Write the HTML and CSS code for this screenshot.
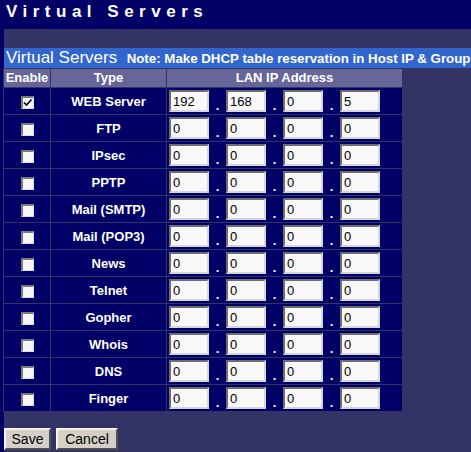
FILE: index.html
```html
<!DOCTYPE html>
<html lang="en">
<head>
    <meta charset="UTF-8">
    <title>Virtual Servers</title>
    <link rel="stylesheet" href="styles.css">
</head>
<body>
    <div class="page-title">Virtual Servers</div>

    <div class="main">
        <div class="section-bar">
            <span class="section-name">Virtual Servers</span>
            <span class="section-note">Note: Make DHCP table reservation in Host IP &amp; Group</span>
        </div>

        <form>
            <table class="servers">
                <tr>
                    <th class="col-enable">Enable</th>
                    <th class="col-type">Type</th>
                    <th class="col-ip">LAN IP Address</th>
                </tr>
                <tr>
                    <td><input type="checkbox" class="chk" checked></td>
                    <td>WEB Server</td>
                    <td><div class="ip"><input type="text" value="192"><span class="dot">.</span><input type="text" value="168"><span class="dot">.</span><input type="text" value="0"><span class="dot">.</span><input type="text" value="5"></div></td>
                </tr>
                <tr>
                    <td><input type="checkbox" class="chk"></td>
                    <td>FTP</td>
                    <td><div class="ip"><input type="text" value="0"><span class="dot">.</span><input type="text" value="0"><span class="dot">.</span><input type="text" value="0"><span class="dot">.</span><input type="text" value="0"></div></td>
                </tr>
                <tr>
                    <td><input type="checkbox" class="chk"></td>
                    <td>IPsec</td>
                    <td><div class="ip"><input type="text" value="0"><span class="dot">.</span><input type="text" value="0"><span class="dot">.</span><input type="text" value="0"><span class="dot">.</span><input type="text" value="0"></div></td>
                </tr>
                <tr>
                    <td><input type="checkbox" class="chk"></td>
                    <td>PPTP</td>
                    <td><div class="ip"><input type="text" value="0"><span class="dot">.</span><input type="text" value="0"><span class="dot">.</span><input type="text" value="0"><span class="dot">.</span><input type="text" value="0"></div></td>
                </tr>
                <tr>
                    <td><input type="checkbox" class="chk"></td>
                    <td>Mail (SMTP)</td>
                    <td><div class="ip"><input type="text" value="0"><span class="dot">.</span><input type="text" value="0"><span class="dot">.</span><input type="text" value="0"><span class="dot">.</span><input type="text" value="0"></div></td>
                </tr>
                <tr>
                    <td><input type="checkbox" class="chk"></td>
                    <td>Mail (POP3)</td>
                    <td><div class="ip"><input type="text" value="0"><span class="dot">.</span><input type="text" value="0"><span class="dot">.</span><input type="text" value="0"><span class="dot">.</span><input type="text" value="0"></div></td>
                </tr>
                <tr>
                    <td><input type="checkbox" class="chk"></td>
                    <td>News</td>
                    <td><div class="ip"><input type="text" value="0"><span class="dot">.</span><input type="text" value="0"><span class="dot">.</span><input type="text" value="0"><span class="dot">.</span><input type="text" value="0"></div></td>
                </tr>
                <tr>
                    <td><input type="checkbox" class="chk"></td>
                    <td>Telnet</td>
                    <td><div class="ip"><input type="text" value="0"><span class="dot">.</span><input type="text" value="0"><span class="dot">.</span><input type="text" value="0"><span class="dot">.</span><input type="text" value="0"></div></td>
                </tr>
                <tr>
                    <td><input type="checkbox" class="chk"></td>
                    <td>Gopher</td>
                    <td><div class="ip"><input type="text" value="0"><span class="dot">.</span><input type="text" value="0"><span class="dot">.</span><input type="text" value="0"><span class="dot">.</span><input type="text" value="0"></div></td>
                </tr>
                <tr>
                    <td><input type="checkbox" class="chk"></td>
                    <td>Whois</td>
                    <td><div class="ip"><input type="text" value="0"><span class="dot">.</span><input type="text" value="0"><span class="dot">.</span><input type="text" value="0"><span class="dot">.</span><input type="text" value="0"></div></td>
                </tr>
                <tr>
                    <td><input type="checkbox" class="chk"></td>
                    <td>DNS</td>
                    <td><div class="ip"><input type="text" value="0"><span class="dot">.</span><input type="text" value="0"><span class="dot">.</span><input type="text" value="0"><span class="dot">.</span><input type="text" value="0"></div></td>
                </tr>
                <tr>
                    <td><input type="checkbox" class="chk"></td>
                    <td>Finger</td>
                    <td><div class="ip"><input type="text" value="0"><span class="dot">.</span><input type="text" value="0"><span class="dot">.</span><input type="text" value="0"><span class="dot">.</span><input type="text" value="0"></div></td>
                </tr>
            </table>

            <div class="buttons">
                <button type="button" class="btn btn-save">Save</button>
                <button type="button" class="btn btn-cancel">Cancel</button>
            </div>
        </form>
    </div>
</body>
</html>
```

FILE: styles.css
```css
/* General */
body {
    margin: 0;
    padding: 0;
    background-color: #000066;
    font-family: 'Liberation Sans', Arial, sans-serif;
    color: #fff;
    overflow: hidden;
    height: 100vh;
    display: flex;
    flex-direction: column;
}

/* Page title */
.page-title {
    height: 29px;
    flex-shrink: 0;
    padding-left: 6px;
    font-size: 17px;
    font-weight: bold;
    letter-spacing: 5.5px;
    line-height: 24px;
    white-space: nowrap;
}

/* Main area */
.main {
    flex: 1;
    margin-left: 4px;
    background-color: #333366;
    padding-top: 19px;
}

.section-bar {
    background-color: #3366cc;
    height: 20px;
    padding-left: 2px;
    white-space: nowrap;
    overflow: hidden;
    line-height: 20px;
}

.section-name {
    font-size: 17px;
}

.section-note {
    font-size: 13.3px;
    font-weight: bold;
    margin-left: 5px;
}

form {
    margin: 0;
}

/* Table */
.servers {
    border-collapse: separate;
    border-spacing: 1px;
    background-color: #333366;
    width: 400px;
    margin-left: -1px;
    font-size: 13px;
    font-weight: bold;
}

.servers th {
    background-color: #666699;
    height: 18px;
    padding: 0;
    font-size: 13px;
    line-height: 18px;
}

.servers td {
    background-color: #000066;
    height: 26px;
    padding: 0;
    text-align: center;
    vertical-align: middle;
}

.col-enable {
    width: 46px;
}

.col-type {
    width: 115px;
}

.col-ip {
    width: 235px;
}

/* Checkbox */
.chk {
    appearance: none;
    -webkit-appearance: none;
    width: 13px;
    height: 13px;
    margin: 3px 0 0 0;
    box-sizing: border-box;
    background-color: #f6f6f6;
    border-top: 2px solid #7a7a7a;
    border-left: 2px solid #7a7a7a;
    border-right: 1px solid #dcdcdc;
    border-bottom: 1px solid #dcdcdc;
    vertical-align: middle;
}

.chk:checked {
    background-image: url("data:image/svg+xml,%3Csvg xmlns='http://www.w3.org/2000/svg' width='10' height='10'%3E%3Cpath d='M1 4.5 L3.5 7 L8.5 1.5' fill='none' stroke='%23000' stroke-width='1.6'/%3E%3C/svg%3E");
    background-repeat: no-repeat;
    background-position: center;
}

/* IP inputs */
.ip {
    display: flex;
    align-items: center;
    padding-left: 2px;
}

.ip input {
    width: 40px;
    height: 22px;
    box-sizing: border-box;
    margin: 0;
    padding: 0 0 0 2px;
    background-color: #f8f8f8;
    border-top: 2px solid #6e6e6e;
    border-left: 2px solid #6e6e6e;
    border-right: 2px solid #d6d6d6;
    border-bottom: 2px solid #d6d6d6;
    font-family: 'Liberation Sans', Arial, sans-serif;
    font-size: 13px;
    color: #000;
}

.dot {
    width: 17px;
    text-align: center;
    font-size: 13px;
    font-weight: bold;
    padding-top: 8px;
}

/* Buttons */
.buttons {
    display: flex;
    gap: 5px;
    margin-top: 16px;
}

.btn {
    height: 22px;
    margin: 0;
    padding: 0;
    background-color: #d4d0c8;
    border-top: 2px solid #f4f4f4;
    border-left: 2px solid #f4f4f4;
    border-right: 2px solid #505050;
    border-bottom: 2px solid #505050;
    font-family: 'Liberation Sans', Arial, sans-serif;
    font-size: 14px;
    color: #000;
    cursor: pointer;
}

.btn-save {
    width: 47px;
}

.btn-cancel {
    width: 62px;
}
```
